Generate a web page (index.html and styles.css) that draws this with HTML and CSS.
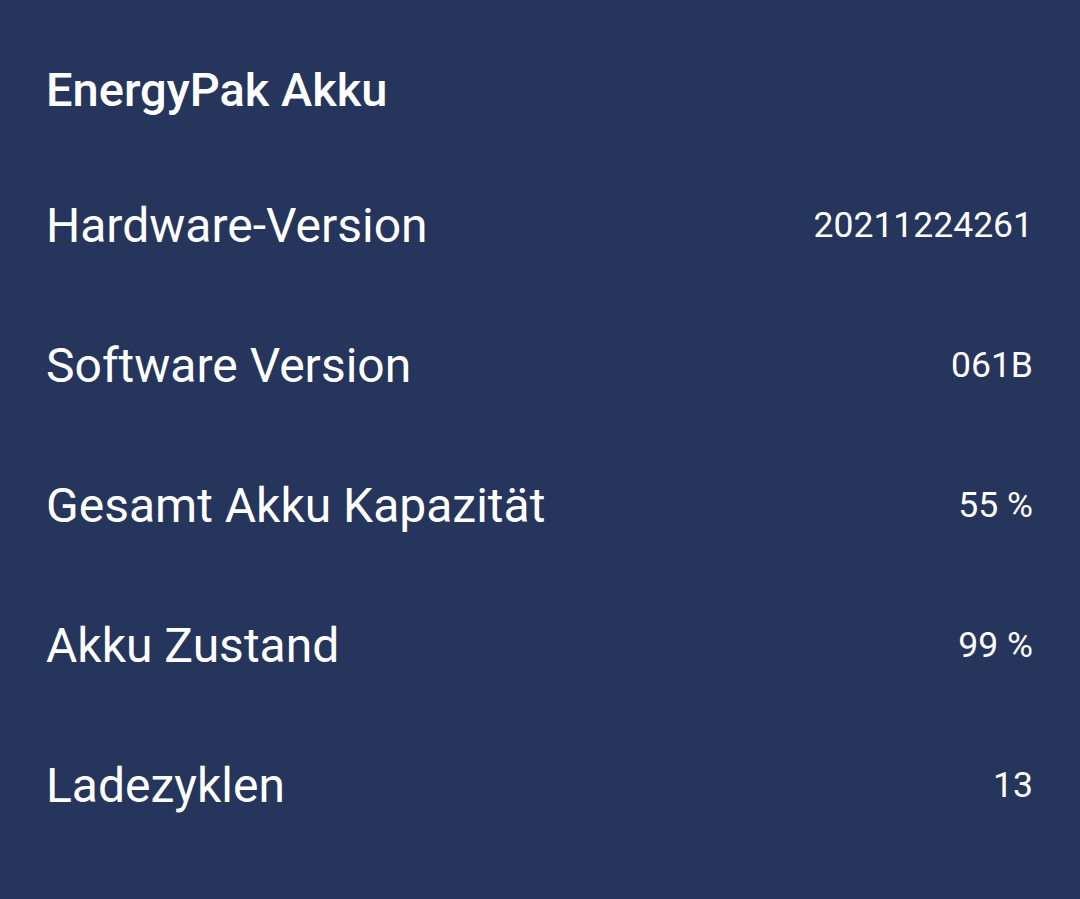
FILE: index.html
```html
<!DOCTYPE html>
<html lang="de">
<head>
  <meta charset="UTF-8" />
  <meta name="viewport" content="width=device-width, initial-scale=1.0" />
  <title>EnergyPak Akku</title>
  <link rel="stylesheet" href="styles.css">
</head>
<body>
  <section class="battery-info">
    <h1 class="battery-title">EnergyPak Akku</h1>

    <ul class="info-list">
      <li class="info-row">
        <span class="info-label">Hardware-Version</span>
        <span class="info-value">20211224261</span>
      </li>
      <li class="info-row">
        <span class="info-label">Software Version</span>
        <span class="info-value">061B</span>
      </li>
      <li class="info-row">
        <span class="info-label">Gesamt Akku Kapazität</span>
        <span class="info-value">55 %</span>
      </li>
      <li class="info-row">
        <span class="info-label">Akku Zustand</span>
        <span class="info-value">99 %</span>
      </li>
      <li class="info-row">
        <span class="info-label">Ladezyklen</span>
        <span class="info-value">13</span>
      </li>
    </ul>
  </section>
</body>
</html>
```

FILE: styles.css
```css
:root {
  --bg: #26355b;
  --text: #ffffff;
}

html,
body {
  margin: 0;
  padding: 0;
  height: 100%;
}

body {
  background: var(--bg);
  color: var(--text);
  font-family: Roboto, 'Noto Sans', sans-serif;
}

.battery-info {
  padding: 62px 47px 0 46px;
}

.battery-title {
  margin: 0;
  font-size: 47px;
  line-height: 56px;
  font-weight: 500;
}

.info-list {
  list-style: none;
  margin: 37px 0 0;
  padding: 0;
}

.info-row {
  display: flex;
  align-items: center;
  justify-content: space-between;
  height: 140px;
}

.info-label {
  font-size: 48px;
}

.info-value {
  font-size: 35.5px;
}
```
